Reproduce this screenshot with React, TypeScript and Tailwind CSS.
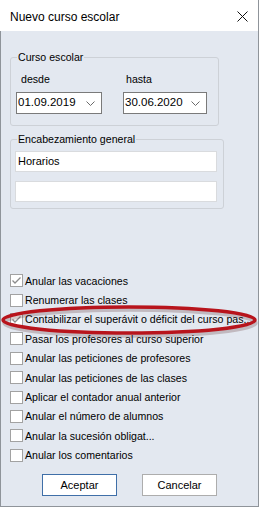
import React from 'react';

const font = { fontFamily: '"Liberation Sans", Arial, sans-serif' };

const options: { label: string; checked: boolean }[] = [
  { label: 'Anular las vacaciones', checked: true },
  { label: 'Renumerar las clases', checked: false },
  { label: 'Contabilizar el superávit o déficit del curso pas...', checked: true },
  { label: 'Pasar los profesores al curso superior', checked: false },
  { label: 'Anular las peticiones de profesores', checked: false },
  { label: 'Anular las peticiones de las clases', checked: false },
  { label: 'Aplicar el contador anual anterior', checked: false },
  { label: 'Anular el número de alumnos', checked: false },
  { label: 'Anular la sucesión obligat...', checked: false },
  { label: 'Anular los comentarios', checked: false },
];

const Chevron = () => (
  <svg width="9" height="5" viewBox="0 0 9 5" className="shrink-0">
    <path d="M0.5 0.5 L4.5 4.5 L8.5 0.5" fill="none" stroke="#6b6b6b" strokeWidth="1" />
  </svg>
);

// date combo used in the "Curso escolar" box
const DateBox = ({ value, width }: { value: string; width: string }) => (
  <div className={`${width} h-[22px] bg-white border border-[#7a7a7a] flex items-center justify-between pl-[1px] pr-[6px]`}>
    <span className="text-[11.5px] text-black">{value}</span>
    <Chevron />
  </div>
);

const CheckRow = ({ label, checked }: { label: string; checked: boolean }) => (
  <div className="h-[19.4px] flex items-center">
    <div className="w-[13px] h-[13px] bg-white border border-[#a2a2a2] flex items-center justify-center shrink-0">
      {checked && (
        <svg width="11" height="11" viewBox="0 0 11 11">
          <path d="M1.5 5.5 L4 8 L9.5 2.5" fill="none" stroke="#8c8c8c" strokeWidth="1.3" />
        </svg>
      )}
    </div>
    <span className="ml-[2px] text-[10.6px] leading-[12px] text-black whitespace-nowrap">{label}</span>
  </div>
);

export default function App() {
  return (
    <div className="w-[259px] h-[507px] flex flex-col relative select-none" style={font}>
      {/* Title bar */}
      <div className="h-[31px] bg-white flex items-center justify-between pl-[10px] pr-[10px] border-r border-[#8f949a] shrink-0">
        <span className="text-[12px] text-black pt-[3px]">Nuevo curso escolar</span>
        <svg width="11" height="11" viewBox="0 0 11 11" className="mt-[1px]">
          <path d="M0.5 0.5 L10.5 10.5 M10.5 0.5 L0.5 10.5" stroke="#111" strokeWidth="1" />
        </svg>
      </div>

      {/* Body */}
      <div className="flex-1 bg-[#e3e8f0] border-l border-r border-b border-[#8f949a] flex flex-col">
        <fieldset className="mt-[20px] ml-[9px] w-[209px] border border-[#cdd1d7] rounded-[3px] pl-[5px] pb-[11px]">
          <legend className="ml-[1px] px-[1px] text-[10.6px] leading-[12px] text-black">Curso escolar</legend>
          <div className="flex mt-[10px]">
            <div className="flex flex-col w-[107px]">
              <span className="pl-[5px] text-[10.6px] leading-[12px] text-black">desde</span>
              <div className="mt-[7px]">
                <DateBox value="01.09.2019" width="w-[86px]" />
              </div>
            </div>
            <div className="flex flex-col">
              <span className="pl-[3px] text-[10.6px] leading-[12px] text-black">hasta</span>
              <div className="mt-[7px]">
                <DateBox value="30.06.2020" width="w-[84px]" />
              </div>
            </div>
          </div>
        </fieldset>

        <fieldset className="mt-[7px] ml-[9px] w-[214px] border border-[#cdd1d7] rounded-[3px] pl-[4px] pb-[6px]">
          <legend className="ml-[2px] px-[1px] text-[10.6px] leading-[12px] text-black">Encabezamiento general</legend>
          <div className="mt-[6px] w-[202px] h-[21px] bg-white border border-[#d9dbde] flex items-center pl-[2px]">
            <span className="text-[11px] text-black">Horarios</span>
          </div>
          <div className="mt-[9px] w-[202px] h-[21px] bg-white border border-[#d9dbde]" />
        </fieldset>

        <div className="mt-[62px] pl-[9px] flex flex-col">
          {options.map((o) => (
            <CheckRow key={o.label} label={o.label} checked={o.checked} />
          ))}
        </div>

        <div className="mt-[9px] flex justify-center gap-[25px]">
          <button className="w-[75px] h-[22px] bg-white border border-[#3f6fa8] text-[11px] text-black">Aceptar</button>
          <button className="w-[75px] h-[22px] bg-white border border-[#adadad] text-[11px] text-black">Cancelar</button>
        </div>
      </div>

      {/* Red highlight ellipse over the third option */}
      <svg className="absolute left-0 top-[300px] pointer-events-none" width="259" height="40" viewBox="0 0 259 40">
        <ellipse cx="129" cy="21.5" rx="126" ry="13" fill="none" stroke="#5a2a2a" strokeOpacity="0.25" strokeWidth="3.5" transform="translate(1 1.5)" />
        <ellipse cx="129" cy="20" rx="126" ry="13" fill="none" stroke="#b8141c" strokeWidth="3.5" />
      </svg>
    </div>
  );
}
